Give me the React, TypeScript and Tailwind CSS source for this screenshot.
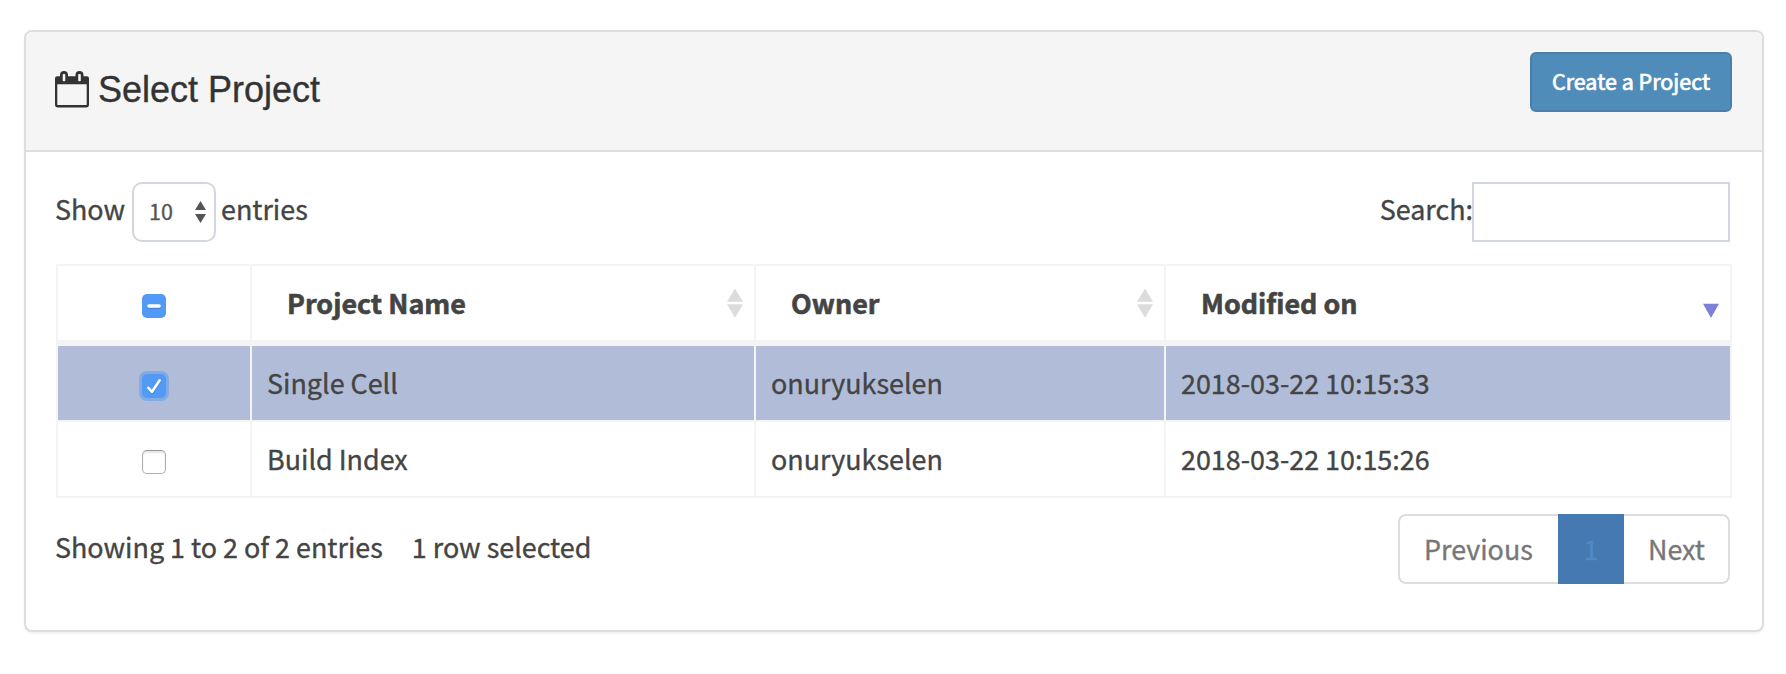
import React from "react";

type Project = { name: string; owner: string; modified: string; selected: boolean };

const projects: Project[] = [
  { name: "Single Cell", owner: "onuryukselen", modified: "2018-03-22 10:15:33", selected: true },
  { name: "Build Index", owner: "onuryukselen", modified: "2018-03-22 10:15:26", selected: false },
];

function CalendarIcon() {
  return (
    <svg width="34" height="37" viewBox="0 0 34 37" className="block">
      <path
        fill="#333"
        fillRule="evenodd"
        d="M2.500 5.200H5V4a4 4 0 0 1 8 0v1.200h7.500V4a4 4 0 0 1 8 0v1.200h3A2.300 2.300 0 0 1 34 7.500V34a2.400 2.400 0 0 1-2.400 2.400H2.400A2.400 2.400 0 0 1 0 34V7.500A2.300 2.300 0 0 1 2.500 5.200ZM2.300 13.300V34h29.400V13.300ZM7.700 3.800V9.400a.8.800 0 0 0 .8.800h1a.8.800 0 0 0 .8-.8V3.800a.8.800 0 0 0-.8-.8h-1a.8.800 0 0 0-.8.800ZM23.200 3.800V9.400a.8.800 0 0 0 .8.800h1a.8.800 0 0 0 .8-.8V3.800a.8.800 0 0 0-.8-.8h-1a.8.800 0 0 0-.8.800Z"
      />
    </svg>
  );
}

function SortBoth() {
  return (
    <svg width="16" height="30" viewBox="0 0 16 30" className="block" fill="#dcdcdc">
      <path d="M8 0.500 16 13.800H0ZM0 16.300h16L8 29.800Z" />
    </svg>
  );
}

function SortDesc() {
  return (
    <svg width="16" height="30" viewBox="0 0 16 30" className="block" fill="#7b80d8">
      <path d="M0 15.800h16L8 30Z" />
    </svg>
  );
}

function Checkbox({ state }: { state: "on" | "off" | "mixed" }) {
  if (state === "off") {
    return (
      <span className="block size-6 rounded-[5px] border border-[#adadad] border-t-[#999] bg-white shadow-[inset_0_2px_2px_rgba(0,0,0,0.1)]" />
    );
  }
  const focus = state === "on" ? "shadow-[0_0_0_3px_#83abe3]" : "";
  return (
    <span className={"block size-6 rounded-[5px] bg-[#539af6] " + focus}>
      <svg width="24" height="24" viewBox="0 0 24 24" fill="none" stroke="#fff" strokeLinecap="round" strokeLinejoin="round">
        {state === "on" ? (
          <>
            <path d="M6.500 15.200 10.200 19.200 18 7.500" stroke="#3d7fd6" strokeWidth="2.500" opacity=".6" />
            <path d="M6.300 13.800 10 17.800 17.700 6.300" strokeWidth="2.500" />
          </>
        ) : (
          <>
            <path d="M7 13.500h10" stroke="#3d7fd6" strokeWidth="3.500" opacity=".6" />
            <path d="M7 12h10" strokeWidth="3.600" />
          </>
        )}
      </svg>
    </span>
  );
}

function HeadCell({ label, sort }: { label: string; sort: "both" | "desc" }) {
  return (
    <div role="columnheader" className="flex items-center justify-between bg-white pr-[11px] pl-[35px] font-bold">
      <span className="-mt-px [-webkit-text-stroke:0.6px]">{label}</span>
      {sort === "both" ? <SortBoth /> : <SortDesc />}
    </div>
  );
}

function Row({ project }: { project: Project }) {
  const cell = project.selected ? "flex items-center bg-[#b1bdd8]" : "flex items-center bg-white";
  return (
    <div role="row" className="grid h-[74px] grid-cols-[192px_502px_408px_564px] gap-x-0.5">
      <div role="cell" className={cell + " justify-center pt-[6px]"}>
        <Checkbox state={project.selected ? "on" : "off"} />
      </div>
      <div role="cell" className={cell + " pb-px pl-[15px]"}>{project.name}</div>
      <div role="cell" className={cell + " pb-px pl-[15px]"}>{project.owner}</div>
      <div role="cell" className={cell + " pb-px pl-[15px]"}>{project.modified}</div>
    </div>
  );
}

export default function App() {
  return (
    <main className="h-[674px] w-[1786px] bg-white pt-[30px] pl-6 font-['Noto_Sans_CJK_SC',sans-serif] text-[26.9px] leading-[40px] whitespace-nowrap text-[#444] [-webkit-text-stroke:0.35px]">
      <section className="h-[602px] w-[1740px] rounded-lg border-2 border-[#ddd] bg-white shadow-[0_2px_2px_rgba(0,0,0,0.05)]">
        <header className="flex h-[120px] items-start justify-between rounded-t-md border-b-2 border-[#ddd] bg-[#f5f5f5] pr-[30px] pl-[29px]">
          <h3 className="flex items-start pt-[39px] font-['Liberation_Sans',sans-serif] text-[36px] text-[#333]">
            <CalendarIcon />
            <span className="-mt-px ml-[9px]">Select Project</span>
          </h3>
          <button className="mt-5 flex h-[60px] w-[202px] items-center justify-center rounded-md border-2 border-[#4a7fab] bg-[#4f8cb9] pb-[3px] text-[21.500px] font-normal text-white [-webkit-text-stroke:0.7px]">
            Create a Project
          </button>
        </header>

        <div className="pt-[30px] pr-[30px] pl-[30px]">
          <div className="flex h-[60px] justify-between pr-0.5">
            <div className="-ml-px flex items-center">
              <span className="w-[77px] pb-[7px]">Show</span>
              <div className="flex h-[60px] w-[84px] items-center justify-between rounded-[10px] border-2 border-[#d2d6de] pr-2 pl-[15px] text-[21.500px] text-[#555]">
                <span className="pb-[3px]">10</span>
                <svg width="11" height="22" viewBox="0 0 11 22" fill="#555">
                  <path d="M5.500 0 11 9H0ZM0 13h11L5.500 22Z" />
                </svg>
              </div>
              <span className="ml-[5px] pb-[7px]">entries</span>
            </div>
            <div className="flex items-center">
              <span className="-mr-px pb-[7px]">Search:</span>
              <input aria-label="Search" className="h-[60px] w-[258px] border-2 border-[#d2d6de] bg-white px-3 outline-none" />
            </div>
          </div>

          <div role="table" className="mt-[22px] flex w-[1676px] flex-col bg-[#f4f4f4] p-0.5">
            <div role="row" className="mb-[6px] grid h-[74px] grid-cols-[192px_502px_408px_564px] gap-x-0.5">
              <div role="columnheader" className="flex items-center justify-center bg-white pt-[6px]">
                <Checkbox state="mixed" />
              </div>
              <HeadCell label="Project Name" sort="both" />
              <HeadCell label="Owner" sort="both" />
              <HeadCell label="Modified on" sort="desc" />
            </div>
            <div className="flex flex-col gap-0.5">
              {projects.map((p) => (
                <Row key={p.modified} project={p} />
              ))}
            </div>
          </div>

          <footer className="mt-4 flex h-[70px] justify-between pr-0.5">
            <div className="-ml-px flex items-center pb-1">
              <span>Showing 1 to 2 of 2 entries</span>
              <span className="ml-[29px]">1 row selected</span>
            </div>
            <nav className="flex text-[#777]">
              <span className="flex w-[160px] items-center rounded-l-lg border-2 border-r-0 border-[#ddd] pl-6">Previous</span>
              <span className="flex w-[66px] items-center justify-center bg-[#4479b2] text-[#508ac6]">1</span>
              <span className="flex w-[106px] items-center rounded-r-lg border-2 border-l-0 border-[#ddd] pl-6">Next</span>
            </nav>
          </footer>
        </div>
      </section>
    </main>
  );
}
